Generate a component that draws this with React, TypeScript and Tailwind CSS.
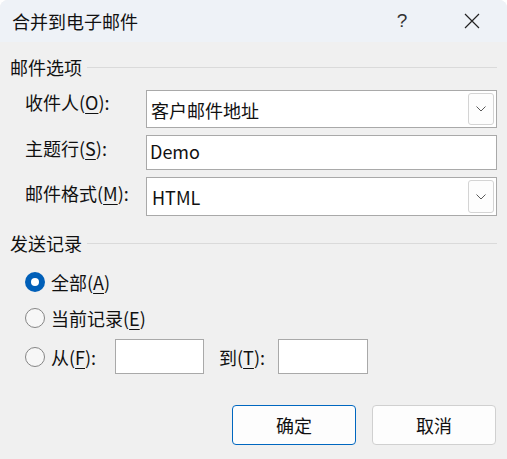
import React from 'react'

const font = { fontFamily: '"Noto Sans CJK SC", "Noto Sans", sans-serif' }

function U({ children }: { children: React.ReactNode }) {
  return <span className="underline underline-offset-[3px] decoration-1">{children}</span>
}

function Chevron() {
  return (
    <div className="absolute right-[2px] top-[2px] bottom-[2px] w-[26px] rounded-[3px] border border-[#d4d4d4] bg-[#fdfdfd] flex items-center justify-center">
      <svg width="10" height="6" viewBox="0 0 10 6" fill="none">
        <path d="M0.5 0.5 L5 5 L9.5 0.5" stroke="#5a5a5a" strokeWidth="1" />
      </svg>
    </div>
  )
}

function SectionHeader({ title, className }: { title: string; className?: string }) {
  return (
    <div className={'flex items-center gap-[5px] pl-[10px] pr-[10px] ' + (className ?? '')}>
      <span className="text-[18px] leading-[24px]">{title}</span>
      <div className="flex-1 h-px bg-[#dadada] mt-[1px]" />
    </div>
  )
}

function Radio({ checked }: { checked?: boolean }) {
  if (checked) {
    return (
      <div className="w-[20px] h-[20px] rounded-full bg-[#005fb8] flex items-center justify-center shrink-0">
        <div className="w-[8px] h-[8px] rounded-full bg-white" />
      </div>
    )
  }
  return <div className="w-[20px] h-[20px] rounded-full border border-[#858585] bg-[#f7f7f7] shrink-0" />
}

export default function App() {
  return (
    <div className="w-[507px] h-[459px] bg-white text-[#111]" style={font}>
      <div className="w-full h-full rounded-t-[8px] overflow-hidden bg-[#f0f0f0] flex flex-col">
        {/* 標題列 */}
        <div className="h-[42px] bg-[#eef2f7] flex items-center shrink-0">
          <span className="pl-[12px] text-[18px] leading-[24px] flex-1">合并到电子邮件</span>
          <div className="w-[70px] h-full flex items-center justify-center text-[19px] text-[#333]" style={{ fontFamily: '"Liberation Sans", sans-serif' }}>?</div>
          <div className="w-[70px] h-full flex items-center justify-center">
            <svg width="16" height="16" viewBox="0 0 16 16" fill="none">
              <path d="M1 1 L15 15 M15 1 L1 15" stroke="#222" strokeWidth="1.2" />
            </svg>
          </div>
        </div>

        <SectionHeader title="邮件选项" className="mt-[13px]" />

        <div className="mt-[11px] pl-[25px] pr-[10px] grid grid-cols-[121px_1fr] gap-y-[7px] text-[18px]">
          <div className="leading-[24px] pt-[0px]">收件人(<U>O</U>):</div>
          <div className="relative h-[38px] border border-[#a9a9a9] bg-white flex items-center pl-[4px] leading-[24px]">
            <span className="mt-[2px]">客户邮件地址</span>
            <Chevron />
          </div>

          <div className="leading-[24px] pt-[1px]">主题行(<U>S</U>):</div>
          <div className="h-[35px] border border-[#a9a9a9] bg-white flex items-center pl-[3px] leading-[24px]">
            <span className="mt-[-3px]">Demo</span>
          </div>

          <div className="leading-[24px] pt-[4px]">邮件格式(<U>M</U>):</div>
          <div className="relative h-[39px] border border-[#a9a9a9] bg-white flex items-center pl-[5px] leading-[24px]">
            <span>HTML</span>
            <Chevron />
          </div>
        </div>

        <SectionHeader title="发送记录" className="mt-[15px]" />

        <div className="pl-[25px] text-[18px] leading-[24px] flex flex-col">
          <div className="mt-[15px] flex items-center gap-[6px]">
            <Radio checked />
            <span>全部(<U>A</U>)</span>
          </div>
          <div className="mt-[12px] flex items-center gap-[6px]">
            <Radio />
            <span>当前记录(<U>E</U>)</span>
          </div>
          <div className="mt-[9px] flex items-center">
            <Radio />
            <span className="ml-[6px] w-[64px]">从(<U>F</U>):</span>
            <div className="w-[89px] h-[35px] border border-[#a9a9a9] bg-white" />
            <span className="ml-[15px] w-[59px]">到(<U>T</U>):</span>
            <div className="w-[90px] h-[35px] border border-[#a9a9a9] bg-white" />
          </div>
        </div>

        <div className="mt-[31px] pr-[11px] flex justify-end gap-[16px] text-[18px]">
          <button className="w-[124px] h-[40px] rounded-[4px] border border-[#0067c0] bg-[#fdfdfd] leading-[24px]">确定</button>
          <button className="w-[124px] h-[40px] rounded-[4px] border border-[#d0d0d0] bg-[#fdfdfd] leading-[24px]">取消</button>
        </div>
      </div>
    </div>
  )
}
